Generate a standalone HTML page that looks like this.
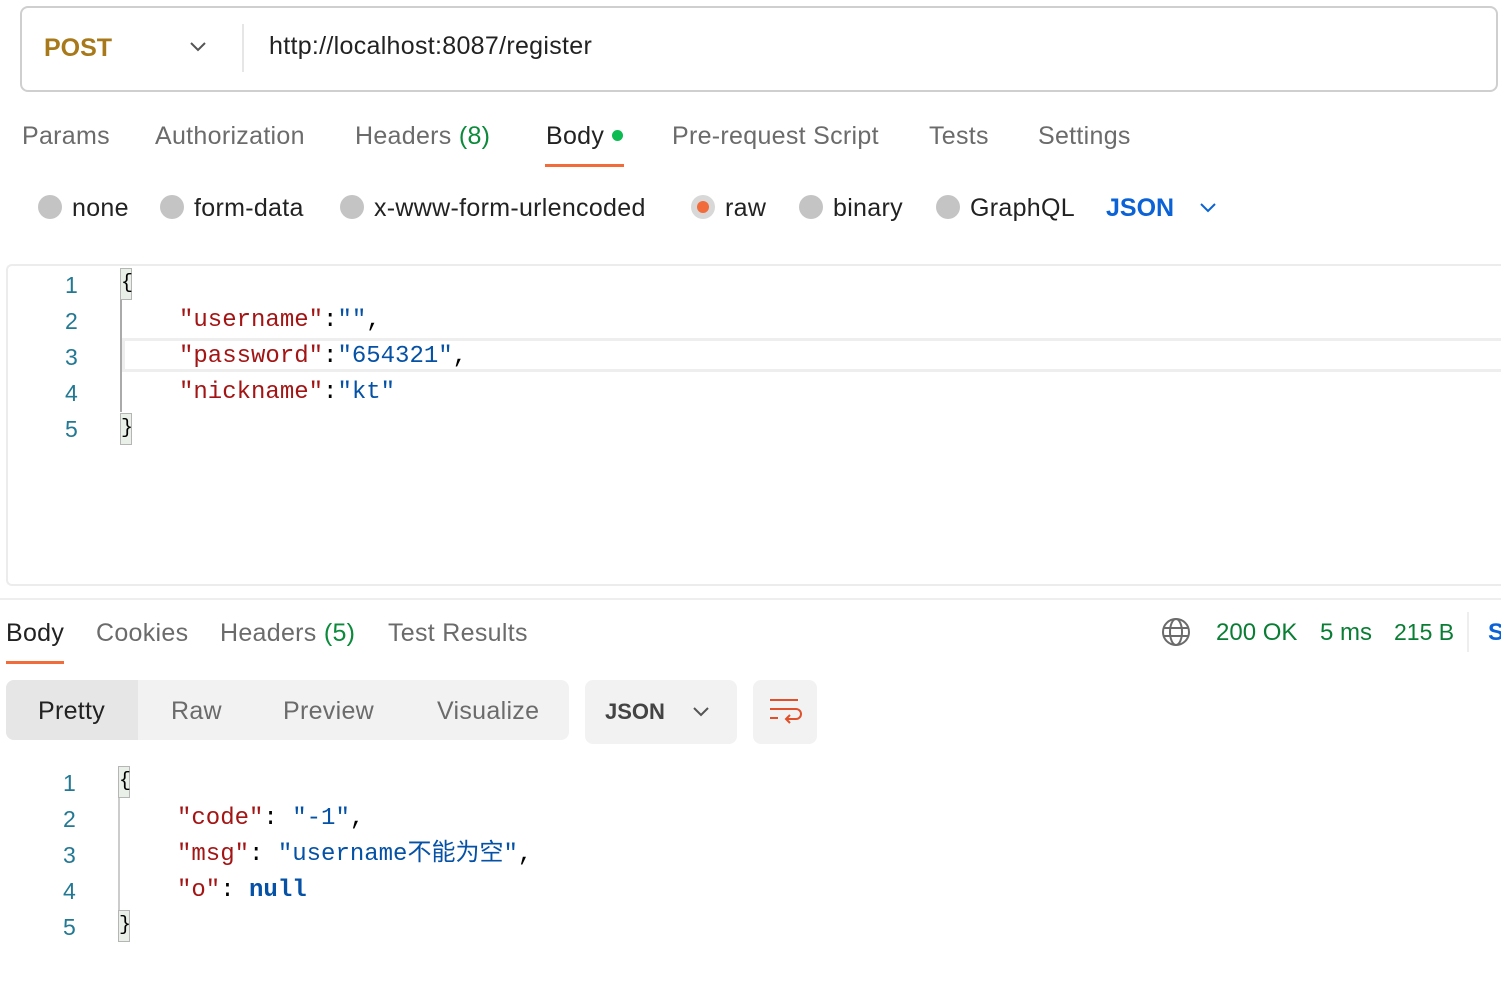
<!DOCTYPE html>
<html><head><meta charset="utf-8"><style>
body{margin:0;width:1501px;height:985px;background:#fff;position:relative;overflow:hidden;font-family:"Liberation Sans","Noto Sans CJK SC",sans-serif;}
.a{position:absolute;white-space:nowrap}
.t{font-size:25px;letter-spacing:0.3px;color:#6b6b6b}
.code{font-family:"Liberation Mono","Noto Sans CJK SC",monospace;font-size:24px;line-height:28px}
.ln{color:#237893;font-family:"Liberation Sans",sans-serif;font-size:23px}
.k{color:#a31515}.s{color:#0451a5}
.rad{width:24px;height:24px;border-radius:50%;background:#c4c4c4;position:absolute}
.br{position:absolute;width:12px;height:32px;border:1px solid #b5b5b5;background:#e8f0e8;box-sizing:border-box;font-family:"Liberation Mono",monospace;font-size:20px;line-height:30px;text-align:center;color:#000}
</style></head><body>
<div class="a" style="left:20px;top:6px;width:1474px;height:82px;border:2px solid #cfcfcf;border-radius:8px"></div>
<div class="a" style="left:44px;top:34px;font-size:25px;font-weight:bold;color:#a8791a">POST</div>
<svg class="a" style="left:189px;top:41px" width="18" height="12"><path d="M2 2l7 7 7-7" fill="none" stroke="#555" stroke-width="2"/></svg>
<div class="a" style="left:242px;top:24px;width:2px;height:48px;background:#e6e6e6"></div>
<div class="a" style="left:269px;top:32px;font-size:25px;letter-spacing:0.3px;color:#222">http://localhost:8087/register</div>

<div class="a t" style="left:22px;top:122px">Params</div>
<div class="a t" style="left:155px;top:122px">Authorization</div>
<div class="a t" style="left:355px;top:122px">Headers <span style="color:#0a8a3a">(8)</span></div>
<div class="a t" style="left:546px;top:122px;color:#222">Body</div>
<div class="a" style="left:612px;top:130px;width:11px;height:11px;border-radius:50%;background:#0cbb52"></div>
<div class="a" style="left:545px;top:164px;width:79px;height:3px;background:#f26b3a"></div>
<div class="a t" style="left:672px;top:122px">Pre-request Script</div>
<div class="a t" style="left:929px;top:122px">Tests</div>
<div class="a t" style="left:1038px;top:122px">Settings</div>

<div class="rad" style="left:38px;top:195px"></div><div class="a t" style="left:72px;top:194px;color:#222">none</div>
<div class="rad" style="left:160px;top:195px"></div><div class="a t" style="left:194px;top:194px;color:#222">form-data</div>
<div class="rad" style="left:340px;top:195px"></div><div class="a t" style="left:374px;top:194px;color:#222">x-www-form-urlencoded</div>
<div class="rad" style="left:691px;top:195px;background:#d8d8d8"></div><div class="a" style="left:697px;top:201px;width:12px;height:12px;border-radius:50%;background:#f26b3a"></div>
<div class="a t" style="left:725px;top:194px;color:#222">raw</div>
<div class="rad" style="left:799px;top:195px"></div><div class="a t" style="left:833px;top:194px;color:#222">binary</div>
<div class="rad" style="left:936px;top:195px"></div><div class="a t" style="left:970px;top:194px;color:#222">GraphQL</div>
<div class="a" style="left:1106px;top:194px;font-size:25px;font-weight:bold;color:#0b62d6">JSON</div>
<svg class="a" style="left:1199px;top:202px" width="18" height="12"><path d="M2 2l7 7 7-7" fill="none" stroke="#0b62d6" stroke-width="2"/></svg>

<div class="a" style="left:6px;top:264px;width:1495px;height:322px;border:2px solid #ececec;border-right:none;border-radius:6px 0 0 6px;box-sizing:border-box"></div>
<div class="a" style="left:122px;top:338px;width:1379px;height:34px;border:3px solid #eee;border-right:none;box-sizing:border-box"></div>
<div class="a" style="left:120px;top:300px;width:2px;height:112px;background:#aaa"></div>
<div class="a ln" style="left:65px;top:272px">1</div>
<div class="a ln" style="left:65px;top:308px">2</div>
<div class="a ln" style="left:65px;top:344px">3</div>
<div class="a ln" style="left:65px;top:380px">4</div>
<div class="a ln" style="left:65px;top:416px">5</div>
<div class="br" style="left:120px;top:268px">{</div>
<div class="br" style="left:120px;top:413px">}</div>
<div class="a code" style="left:179px;top:307px"><span class="k">"username"</span>:<span class="s">""</span>,</div>
<div class="a code" style="left:179px;top:343px"><span class="k">"password"</span>:<span class="s">"654321"</span>,</div>
<div class="a code" style="left:179px;top:379px"><span class="k">"nickname"</span>:<span class="s">"kt"</span></div>

<div class="a" style="left:0;top:598px;width:1501px;height:2px;background:#eee"></div>
<div class="a t" style="left:6px;top:619px;color:#222">Body</div>
<div class="a" style="left:6px;top:661px;width:58px;height:3px;background:#f26b3a"></div>
<div class="a t" style="left:96px;top:619px">Cookies</div>
<div class="a t" style="left:220px;top:619px">Headers <span style="color:#0a8a3a">(5)</span></div>
<div class="a t" style="left:388px;top:619px">Test Results</div>
<svg class="a" style="left:1161px;top:617px" width="30" height="30" fill="none" stroke="#6b6b6b" stroke-width="2"><circle cx="15" cy="15" r="13"/><ellipse cx="15" cy="15" rx="6" ry="13"/><path d="M2 11h26M2 19h26"/></svg>
<div class="a" style="left:1216px;top:619px;font-size:24px;color:#0a7d34">200 OK</div>
<div class="a" style="left:1320px;top:619px;font-size:24px;color:#0a7d34">5 ms</div>
<div class="a" style="left:1394px;top:619px;font-size:23px;color:#0a7d34">215 B</div>
<div class="a" style="left:1467px;top:612px;width:2px;height:40px;background:#eee"></div>
<div class="a" style="left:1488px;top:619px;font-size:24px;font-weight:bold;color:#0b62d6">S</div>

<div class="a" style="left:6px;top:680px;width:563px;height:60px;background:#f2f2f2;border-radius:8px"></div>
<div class="a" style="left:6px;top:680px;width:132px;height:60px;background:#e6e6e6;border-radius:8px 0 0 8px"></div>
<div class="a t" style="left:38px;top:697px;color:#222">Pretty</div>
<div class="a t" style="left:171px;top:697px">Raw</div>
<div class="a t" style="left:283px;top:697px">Preview</div>
<div class="a t" style="left:437px;top:697px">Visualize</div>
<div class="a" style="left:585px;top:680px;width:152px;height:64px;background:#f2f2f2;border-radius:8px"></div>
<div class="a" style="left:605px;top:699px;font-size:22px;font-weight:bold;color:#444">JSON</div>
<svg class="a" style="left:692px;top:706px" width="18" height="12"><path d="M2 2l7 7 7-7" fill="none" stroke="#555" stroke-width="2"/></svg>
<div class="a" style="left:753px;top:680px;width:64px;height:64px;background:#f2f2f2;border-radius:8px"></div>
<svg class="a" style="left:768px;top:697px" width="34" height="30" fill="none" stroke="#e0502a" stroke-width="2"><path d="M2 3h28M2 12h26a5 5 0 0 1 0 10h-9M22 18l-4 4 4 4M2 21h8"/></svg>

<div class="a" style="left:118px;top:798px;width:2px;height:112px;background:#ccc"></div>
<div class="a ln" style="left:63px;top:770px">1</div>
<div class="a ln" style="left:63px;top:806px">2</div>
<div class="a ln" style="left:63px;top:842px">3</div>
<div class="a ln" style="left:63px;top:878px">4</div>
<div class="a ln" style="left:63px;top:914px">5</div>
<div class="br" style="left:118px;top:766px">{</div>
<div class="br" style="left:118px;top:910px">}</div>
<div class="a code" style="left:177px;top:805px"><span class="k">"code"</span>: <span class="s">"-1"</span>,</div>
<div class="a code" style="left:177px;top:841px;height:28px"><span class="k">"msg"</span>: <span class="s">"username不能为空"</span>,</div>
<div class="a code" style="left:177px;top:877px"><span class="k">"o"</span>: <span class="s" style="font-weight:bold">null</span></div>
</body></html>
